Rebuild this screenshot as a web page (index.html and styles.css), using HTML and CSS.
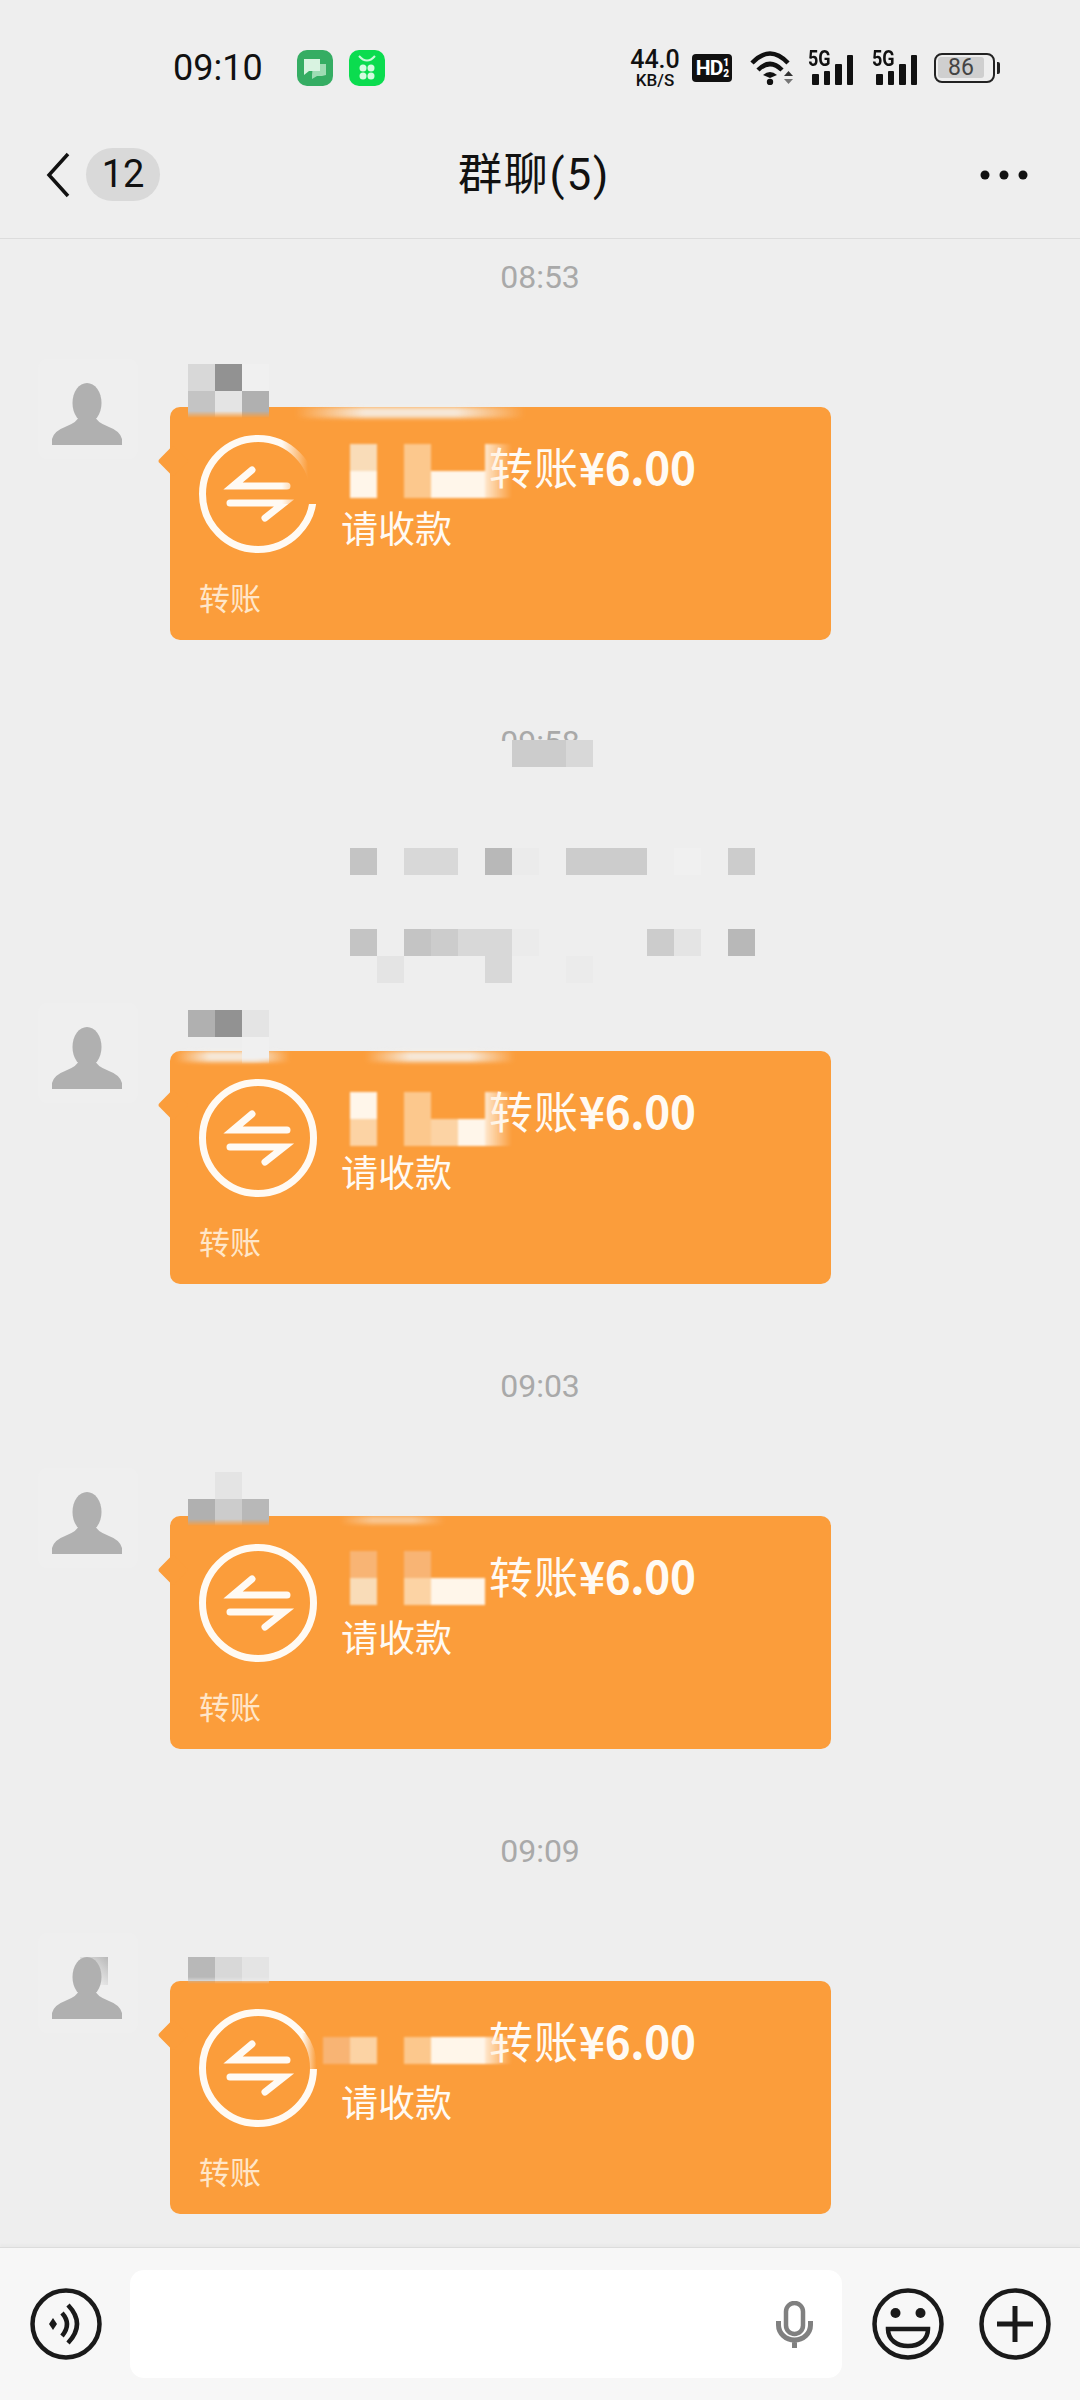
FILE: index.html
```html
<!DOCTYPE html>
<html>
  <head>
    <title>群聊(5)</title>
    <link rel="stylesheet" href="styles.css">
  </head>
  <body>
    <!-- shared icons -->
    <svg class="icon-defs" width="0" height="0">
      <symbol id="person" viewBox="0 0 70 62">
        <ellipse cx="35" cy="20" rx="14.5" ry="20" fill="#b0b0b0"/>
        <path d="M0 62V56Q2 48 13 44Q26 39 28 32H42Q44 39 57 44Q68 48 70 56V62Z" fill="#b0b0b0"/>
      </symbol>
      <symbol id="swap" viewBox="0 0 118 118">
        <circle cx="59" cy="59" r="55.5" fill="none" stroke="#fffaf3" stroke-width="7"/>
        <path d="M53 35L34 51H88M31 68H85L66 83" fill="none" stroke="#fffaf3" stroke-width="7" stroke-linecap="round"/>
      </symbol>
    </svg>

    <div class="status-bar">
      <div class="clock">09:10</div>
      <svg class="app-icon first-app" viewBox="0 0 36 36">
        <rect width="36" height="36" rx="10" fill="#35ad63"/>
        <path d="M16 14H29V25L25 26H20L15 29V25Z" fill="#9fdcb4"/>
        <path d="M7 9H23V21H12L7 25Z" fill="#d9f3e1"/>
      </svg>
      <svg class="app-icon" viewBox="0 0 36 36">
        <rect width="36" height="36" rx="10" fill="#0bdc4f"/>
        <path d="M10 6Q18 15 26 6" fill="none" stroke="#c9f9d9" stroke-width="2"/>
        <circle cx="14" cy="18" r="3.5" fill="#d4fbe0"/>
        <circle cx="22" cy="18" r="3.5" fill="#d4fbe0"/>
        <circle cx="14" cy="26" r="3.5" fill="#d4fbe0"/>
        <circle cx="22" cy="26" r="3.5" fill="#d4fbe0"/>
      </svg>
      <div class="status-right">
        <div class="speed">
          <div class="speed-num">44.0</div>
          <div class="speed-unit">KB/S</div>
        </div>
        <div class="hd-badge">
          <span>HD</span>
          <span class="hd-frac"><b>1</b><b>2</b></span>
        </div>
        <svg class="wifi" width="45" height="34" viewBox="0 0 45 34">
          <path d="M2 12Q20 -7 38 12M8 19Q20 7 32 19" fill="none" stroke="#111" stroke-width="4.5"/>
          <path d="M13 24Q20 18 27 24L20 27Z" fill="#111"/>
          <circle cx="20" cy="31" r="3.2" fill="#111"/>
          <path d="M34 25L38.5 20L43 25Z" fill="#333"/>
          <path d="M34 28H43L38.5 33Z" fill="#777"/>
        </svg>
        <div class="signal">
          <span class="signal-label">5G</span>
          <i class="bar bar-1"></i><i class="bar bar-2"></i><i class="bar bar-3"></i><i class="bar bar-4"></i>
        </div>
        <div class="signal">
          <span class="signal-label">5G</span>
          <i class="bar bar-1"></i><i class="bar bar-2"></i><i class="bar bar-3"></i><i class="bar bar-4"></i>
        </div>
        <div class="battery">
          <div class="battery-body"><div class="battery-fill">86</div></div>
          <div class="battery-nub"></div>
        </div>
      </div>
    </div>

    <div class="top-bar">
      <svg class="back" width="24" height="46" viewBox="0 0 24 46">
        <path d="M22 2L3 23L22 44" fill="none" stroke="#111" stroke-width="3.5"/>
      </svg>
      <div class="unread">12</div>
      <div class="title">群聊(5)</div>
      <svg class="more" width="48" height="10" viewBox="0 0 48 10">
        <circle cx="5" cy="5" r="4.5" fill="#111"/>
        <circle cx="24" cy="5" r="4.5" fill="#111"/>
        <circle cx="43" cy="5" r="4.5" fill="#111"/>
      </svg>
    </div>

    <div class="chat">
      <div class="time">08:53</div>
      <div class="message">
        <div class="avatar"><svg class="person"><use href="#person"/></svg></div>
        <div class="msg-body">
          <div class="name name-a">
            <div class="cells"><i class="gd8"></i><i class="g90"></i><i class="gf0"></i></div>
            <div class="cells"><i class="gc4"></i><i class="ge6"></i><i class="gb0"></i></div>
          </div>
          <div class="transfer">
            <div class="smear smear-a"></div>
            <div class="circle-fade fade-a"></div>
            <div class="blur-name blur-a">
              <div class="cells"><i class="o4"></i><i></i><i class="o2"></i><i></i><i></i><i class="fade-cell"></i></div>
              <div class="cells"><i class="o5"></i><i></i><i class="o2"></i><i class="o5"></i><i class="o5"></i><i class="fade-cell"></i></div>
            </div>
            <div class="transfer-top">
              <svg class="swap"><use href="#swap"/></svg>
              <div class="transfer-text">
                <div class="amount">转账<span class="money">¥6.00</span></div>
                <div class="ask">请收款</div>
              </div>
            </div>
            <div class="transfer-label">转账</div>
          </div>
        </div>
      </div>

      <div class="time time-covered">
        09:58
        <div class="time-cover cells"><i class="gcc"></i><i class="gcc"></i><i class="gd8"></i></div>
      </div>
      <div class="notice">
        <div class="cells"><i class="gc4"></i><i></i><i class="gd8"></i><i class="gd8"></i><i></i><i class="gb8"></i><i class="gec"></i><i></i><i class="gcc"></i><i class="gcc"></i><i class="gcc"></i><i></i><i class="gf0"></i><i></i><i class="gcc"></i></div>
        <div class="cells"></div>
        <div class="cells"></div>
        <div class="cells"><i class="gc4"></i><i></i><i class="gc4"></i><i class="gcc"></i><i class="gd8"></i><i class="gd8"></i><i class="gec"></i><i></i><i></i><i></i><i></i><i class="gcc"></i><i class="ge6"></i><i></i><i class="gb8"></i></div>
        <div class="cells"><i></i><i class="ge6"></i><i></i><i></i><i></i><i class="gd8"></i><i></i><i></i><i class="gec"></i></div>
      </div>

      <div class="message message-tight">
        <div class="avatar"><svg class="person"><use href="#person"/></svg></div>
        <div class="msg-body">
          <div class="name name-b">
            <div class="cells"><i class="gb0"></i><i class="g90"></i><i class="ge6"></i></div>
            <div class="cells"><i></i><i></i><i class="gf0"></i></div>
          </div>
          <div class="transfer">
            <div class="smear smear-b"></div>
            <div class="smear smear-c"></div>
            <div class="blur-name blur-b">
              <div class="cells"><i class="o5"></i><i></i><i class="o2"></i><i></i><i></i><i class="fade-cell"></i></div>
              <div class="cells"><i class="o3"></i><i></i><i class="o2"></i><i class="o3"></i><i class="o5"></i><i class="fade-cell"></i></div>
            </div>
            <div class="transfer-top">
              <svg class="swap"><use href="#swap"/></svg>
              <div class="transfer-text">
                <div class="amount">转账<span class="money">¥6.00</span></div>
                <div class="ask">请收款</div>
              </div>
            </div>
            <div class="transfer-label">转账</div>
          </div>
        </div>
      </div>

      <div class="time">09:03</div>
      <div class="message">
        <div class="avatar"><svg class="person"><use href="#person"/></svg></div>
        <div class="msg-body">
          <div class="name name-c">
            <div class="cells"><i></i><i class="ge6"></i><i></i></div>
            <div class="cells"><i class="gb0"></i><i class="gcc"></i><i class="gb8"></i></div>
          </div>
          <div class="transfer">
            <div class="smear smear-d"></div>
            <div class="blur-name blur-c">
              <div class="cells"><i class="o1"></i><i></i><i class="o1"></i></div>
              <div class="cells"><i class="o4"></i><i></i><i class="o3"></i><i class="o5"></i><i class="o5"></i></div>
            </div>
            <div class="transfer-top">
              <svg class="swap"><use href="#swap"/></svg>
              <div class="transfer-text">
                <div class="amount">转账<span class="money">¥6.00</span></div>
                <div class="ask">请收款</div>
              </div>
            </div>
            <div class="transfer-label">转账</div>
          </div>
        </div>
      </div>

      <div class="time">09:09</div>
      <div class="message">
        <div class="avatar">
          <div class="avatar-cell"></div>
          <svg class="person"><use href="#person"/></svg>
        </div>
        <div class="msg-body">
          <div class="name name-d">
            <div class="cells"><i class="gb8"></i><i class="gd8"></i><i class="ge6"></i></div>
          </div>
          <div class="transfer">
            <div class="circle-fade fade-d"></div>
            <div class="blur-name blur-d">
              <div class="cells"><i class="o1"></i><i class="o3"></i><i></i><i class="o2"></i><i class="o5"></i><i class="o5"></i><i class="fade-cell"></i></div>
            </div>
            <div class="transfer-top">
              <svg class="swap"><use href="#swap"/></svg>
              <div class="transfer-text">
                <div class="amount">转账<span class="money">¥6.00</span></div>
                <div class="ask">请收款</div>
              </div>
            </div>
            <div class="transfer-label">转账</div>
          </div>
        </div>
      </div>
    </div>

    <div class="input-bar">
      <svg class="round-btn" viewBox="0 0 72 72">
        <circle cx="36" cy="36" r="33.5" fill="none" stroke="#1a1a1a" stroke-width="4.5"/>
        <path d="M19 36L23 30L27 36L23 42Z" fill="#1a1a1a"/>
        <path d="M32 25Q42 36 32 48M38 17Q56 36 38 55" fill="none" stroke="#1a1a1a" stroke-width="4.5"/>
      </svg>
      <div class="text-box">
        <svg class="mic" width="37" height="47" viewBox="0 0 37 47">
          <rect x="10" y="2" width="17" height="31" rx="8.5" fill="none" stroke="#808080" stroke-width="4.5"/>
          <path d="M2.5 20V24A16 15 0 0 0 34.5 24V20M18.5 39V47" fill="none" stroke="#808080" stroke-width="5"/>
        </svg>
      </div>
      <svg class="round-btn emoji" viewBox="0 0 72 72">
        <circle cx="36" cy="36" r="33.5" fill="none" stroke="#1a1a1a" stroke-width="4.5"/>
        <circle cx="23.5" cy="25" r="5" fill="#1a1a1a"/>
        <circle cx="48.5" cy="25" r="5" fill="#1a1a1a"/>
        <path d="M16 41H56C56 52 47 58 36 58C25 58 16 52 16 41Z" fill="none" stroke="#1a1a1a" stroke-width="4.5"/>
      </svg>
      <svg class="round-btn plus" viewBox="0 0 72 72">
        <circle cx="36" cy="36" r="33.5" fill="none" stroke="#1a1a1a" stroke-width="4.5"/>
        <path d="M18 36H54M36 18V54" fill="none" stroke="#1a1a1a" stroke-width="5"/>
      </svg>
    </div>
  </body>
</html>
```

FILE: styles.css
```css
* {
  box-sizing: border-box;
}

body {
  margin: 0;
  width: 1080px;
  height: 2400px;
  display: flex;
  flex-direction: column;
  overflow: hidden;
  background-color: #eeeeee;
  color: #111111;
  font-family: Roboto, "Noto Sans CJK SC", sans-serif;
}

.icon-defs {
  position: absolute;
}

/* status bar */
.status-bar {
  height: 112px;
  padding: 24px 80px 0 173px;
  display: flex;
  align-items: center;
  flex: none;
}

.clock {
  font-size: 36px;
  width: 89px;
  white-space: nowrap;
}

.app-icon {
  width: 36px;
  height: 36px;
  margin-left: 16px;
}

.first-app {
  margin-left: 35px;
}

.status-right {
  margin-left: auto;
  display: flex;
  align-items: center;
}

.speed {
  width: 50px;
  text-align: center;
  font-weight: 500;
}

.speed-num {
  font-size: 25px;
  line-height: 25px;
}

.speed-unit {
  font-size: 17px;
  line-height: 17px;
}

.hd-badge {
  width: 40px;
  height: 28px;
  margin-left: 12px;
  background-color: #111111;
  border-radius: 4px;
  color: #ffffff;
  display: flex;
  align-items: center;
  justify-content: center;
  gap: 1px;
  font-size: 21px;
  font-weight: 700;
  letter-spacing: -1px;
}

.hd-frac {
  display: flex;
  flex-direction: column;
  font-size: 10px;
  line-height: 11px;
}

.wifi {
  margin-left: 18px;
}

.signal {
  position: relative;
  width: 45px;
  height: 33px;
  margin-left: 13px;
  padding-left: 4px;
  display: flex;
  align-items: flex-end;
  gap: 5px;
}

.signal + .signal {
  margin-left: 19px;
}

.signal-label {
  position: absolute;
  left: 0;
  top: -4px;
  font-size: 22px;
  line-height: 22px;
  font-weight: 700;
  transform: scaleX(0.82);
  transform-origin: left;
}

.bar {
  width: 7px;
  background-color: #111111;
  border-radius: 1px;
}

.bar-1 {
  height: 11px;
}

.bar-2 {
  height: 14px;
}

.bar-3 {
  height: 21px;
}

.bar-4 {
  height: 30px;
}

.battery {
  margin-left: 17px;
  display: flex;
  align-items: center;
  gap: 2px;
}

.battery-body {
  width: 61px;
  height: 30px;
  padding: 2px;
  border: 2.5px solid #222222;
  border-radius: 8px;
}

.battery-fill {
  width: 46px;
  height: 21px;
  background-color: #cfcfcf;
  border-radius: 3px;
  color: #444444;
  font-size: 23px;
  line-height: 21px;
  text-align: center;
}

.battery-nub {
  width: 3px;
  height: 12px;
  background-color: #222222;
  border-radius: 0 2px 2px 0;
}

/* title row */
.top-bar {
  height: 127px;
  flex: none;
  padding-left: 46px;
  padding-right: 52px;
  padding-bottom: 1px;
  display: flex;
  align-items: center;
  border-bottom: 1px solid #dcdcdc;
}

.unread {
  width: 74px;
  height: 53px;
  margin-left: 16px;
  border-radius: 27px;
  background-color: #d9d9d9;
  font-size: 38px;
  line-height: 53px;
  text-align: center;
}

.title {
  margin-left: 298px;
  font-size: 44px;
  line-height: 60px;
  letter-spacing: 1.8px;
}

.more {
  margin-left: auto;
}

/* messages */
.chat {
  flex: 1;
  overflow: hidden;
}

.time {
  height: 40px;
  margin-top: 80px;
  color: #a9a9a9;
  font-size: 32px;
  line-height: 44px;
  text-align: center;
}

.time:first-child {
  margin-top: 16px;
}

/* lower half of this one is hidden under the mosaic */
.time-covered {
  position: relative;
}

.time-covered::after {
  content: "";
  position: absolute;
  left: 0;
  right: 0;
  top: 21px;
  height: 23px;
  background-color: #eeeeee;
}

.time-cover {
  position: absolute;
  z-index: 1;
  left: 512px;
  top: 20px;
}

.notice {
  margin: 88px 0 0 350px;
}

.cells {
  display: flex;
  height: 27px;
}

.cells i {
  display: block;
  flex: none;
  width: 27px;
  height: 27px;
}

.g90 { background-color: #929292; }
.gb0 { background-color: #b0b0b0; }
.gb8 { background-color: #b8b8b8; }
.gc4 { background-color: #c4c4c4; }
.gcc { background-color: #cccccc; }
.gd8 { background-color: #d8d8d8; }
.ge6 { background-color: #e4e4e4; }
.gec { background-color: #ebebeb; }
.gf0 { background-color: #f0f0f0; }

.o1 { background-color: #f8b474; }
.o2 { background-color: #fcc88d; }
.o3 { background-color: #fcd3a4; }
.o4 { background-color: #f9dcb8; }
.o5 { background-color: #fff6ea; }

.cells .fade-cell {
  background: linear-gradient(to right, rgba(255, 240, 222, 0.9), rgba(255, 240, 222, 0));
}

.message {
  margin: 64px 0 0 38px;
  display: flex;
  gap: 32px;
}

.message-tight {
  margin-top: 20px;
}

.avatar {
  position: relative;
  flex: none;
  width: 100px;
  height: 100px;
  padding: 24px 0 0 14px;
  border-radius: 8px;
  background-color: #efefef;
}

.avatar-cell {
  position: absolute;
  left: 42px;
  top: 24px;
  width: 28px;
  height: 28px;
  background: linear-gradient(to bottom left, #b8b8b8, #efefef 70%);
}

.person {
  position: relative;
  display: block;
  width: 70px;
  height: 62px;
}

.msg-body {
  width: 661px;
}

.name {
  position: relative;
  z-index: 1;
  height: 48px;
  margin-left: 18px;
  -webkit-mask-image: linear-gradient(to bottom, #000 calc(100% - 7px), transparent 100%);
  mask-image: linear-gradient(to bottom, #000 calc(100% - 7px), transparent 100%);
}

.name-a {
  padding-top: 5px;
  height: 59px;
  margin-bottom: -11px;
}

.name-b {
  padding-top: 7px;
  height: 61px;
  margin-bottom: -13px;
}

.name-c {
  padding-top: 4px;
  height: 58px;
  margin-bottom: -10px;
}

.name-d {
  padding-top: 24px;
  height: 51px;
  margin-bottom: -3px;
}

.transfer {
  position: relative;
  height: 233px;
  padding-left: 29px;
  background-color: #fb9d3b;
  border-radius: 10px;
  color: #fffaf3;
}

.transfer::before {
  content: "";
  position: absolute;
  left: -8px;
  top: 43px;
  width: 22px;
  height: 22px;
  background-color: #fb9d3b;
  border-radius: 3px;
  transform: rotate(45deg);
}

.transfer-top {
  position: relative;
  display: flex;
  gap: 24px;
  height: 146px;
  padding-top: 28px;
}

.swap {
  flex: none;
  width: 118px;
  height: 118px;
}

.transfer-text {
  padding-top: 9px;
}

.amount {
  margin-left: 148px;
  font-family: "Noto Sans CJK SC", sans-serif;
  font-size: 44px;
  line-height: 44px;
  letter-spacing: 1px;
  white-space: nowrap;
}

.money {
  font-weight: 700;
  letter-spacing: -0.3px;
}

.ask {
  margin-top: 17px;
  font-family: "Noto Sans CJK SC", sans-serif;
  font-size: 37px;
  line-height: 44px;
}

.transfer-label {
  margin-top: 24px;
  font-family: "Noto Sans CJK SC", sans-serif;
  font-size: 31px;
  line-height: 40px;
  color: #ffe6c8;
}

/* blurred sender name in the bubble */
.blur-name {
  position: absolute;
  z-index: 1;
  left: 180px;
  filter: blur(0.8px);
}

.blur-a {
  top: 37px;
}

.blur-b {
  top: 41px;
}

.blur-c {
  top: 35px;
}

.blur-d {
  top: 56px;
  left: 153px;
}

.smear {
  position: absolute;
  top: 0;
  height: 11px;
  background: linear-gradient(to right, transparent, #f6f0e8 30%, #f6f0e8 70%, transparent);
  filter: blur(2px);
  opacity: 0.9;
}

.smear-a {
  left: 125px;
  width: 230px;
}

.smear-b {
  left: 5px;
  width: 115px;
}

.smear-c {
  left: 195px;
  width: 150px;
}

.smear-d {
  left: 170px;
  width: 105px;
  height: 8px;
  opacity: 0.5;
}

.circle-fade {
  position: absolute;
  z-index: 1;
  background: linear-gradient(to right, transparent, #fb9d3b 65%);
}

.fade-a {
  left: 112px;
  top: 22px;
  width: 40px;
  height: 75px;
}

.fade-d {
  left: 132px;
  top: 52px;
  width: 22px;
  height: 36px;
}

/* bottom input */
.input-bar {
  height: 153px;
  flex: none;
  padding-left: 30px;
  display: flex;
  align-items: center;
  background-color: #f7f7f7;
  border-top: 1px solid #dcdcdc;
  box-shadow: 0 -3px 2px rgba(0, 0, 0, 0.02);
}

.round-btn {
  flex: none;
  width: 72px;
  height: 72px;
}

.text-box {
  width: 712px;
  height: 108px;
  margin-left: 28px;
  padding-right: 29px;
  border-radius: 14px;
  background-color: #ffffff;
  display: flex;
  align-items: center;
  justify-content: flex-end;
}

.emoji {
  margin-left: 30px;
}

.plus {
  margin-left: 35px;
}
```
